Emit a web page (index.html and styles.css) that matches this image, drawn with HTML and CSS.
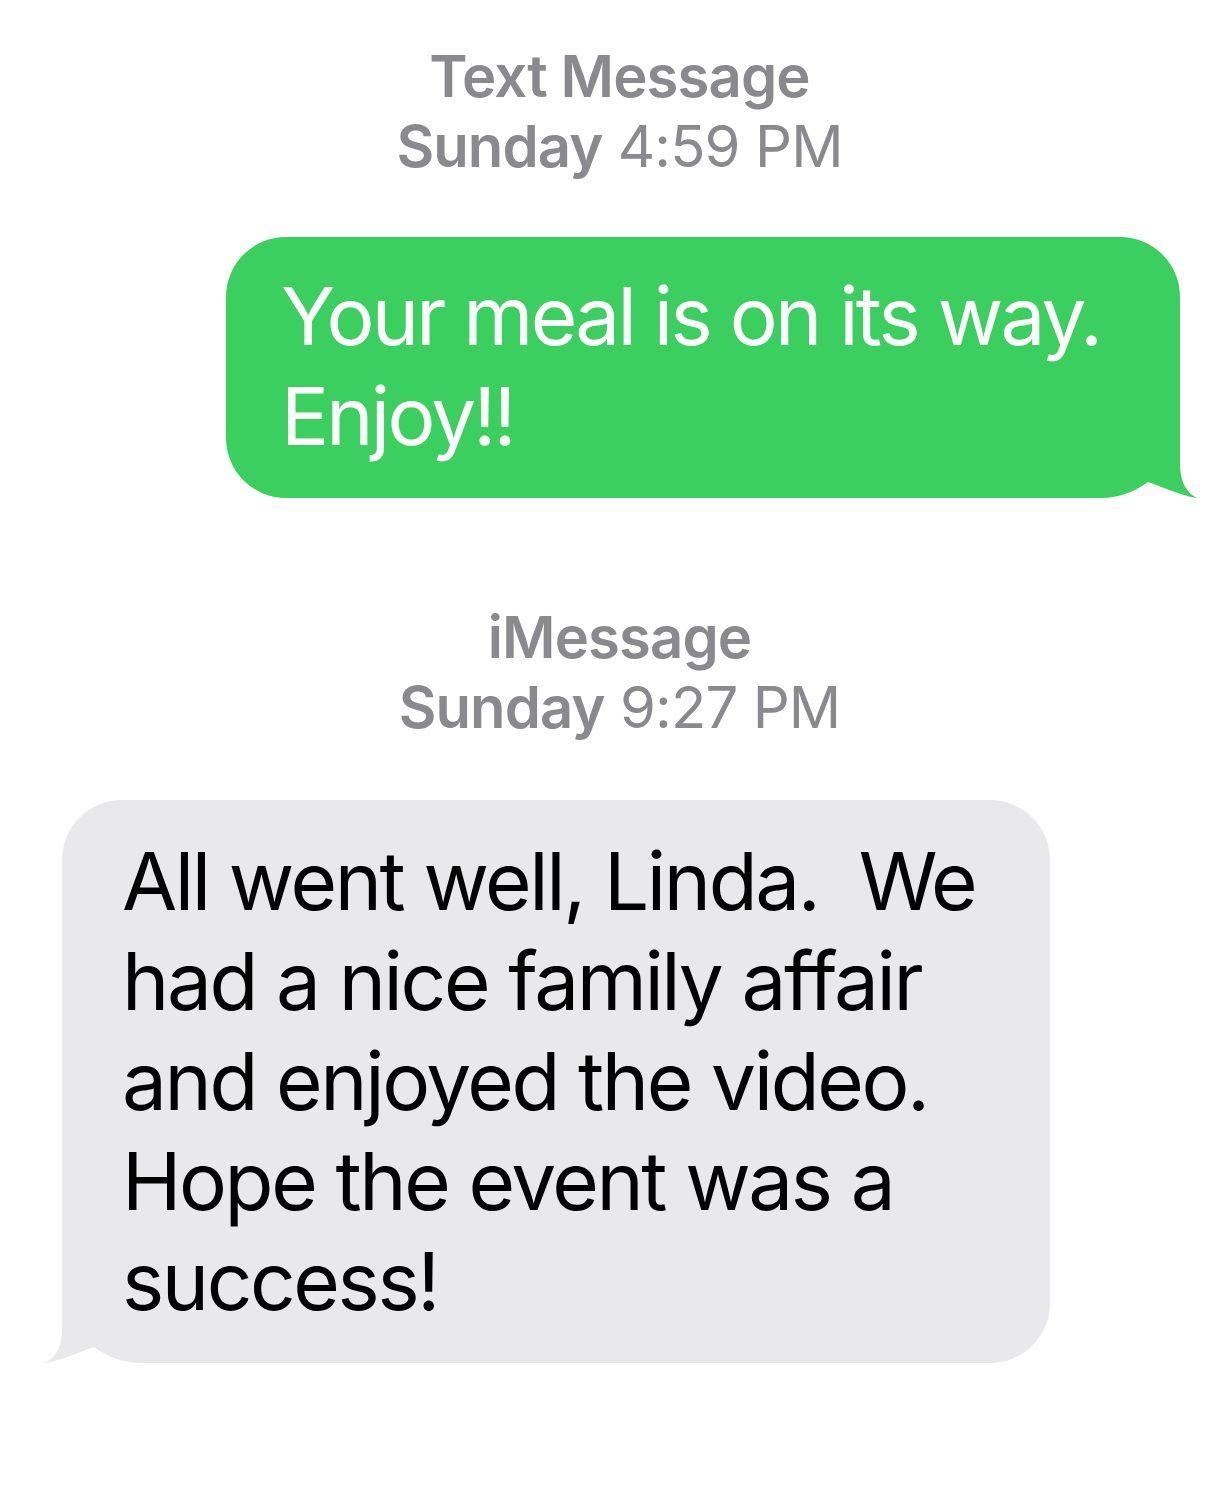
FILE: index.html
```html
<!DOCTYPE html>
<html lang="en">
<head>
<meta charset="utf-8">
<title>Messages</title>
<link rel="stylesheet" href="styles.css">
</head>
<body>
<main class="thread">
  <div class="stamp">
    <div class="stamp-kind">Text Message</div>
    <div class="stamp-time"><b>Sunday</b> 4:59 PM</div>
  </div>

  <div class="row row-out">
    <div class="bubble bubble-out">
      Your meal is on its way.<br>Enjoy!!
      <svg class="tail tail-out" viewBox="0 0 50 80" width="50" height="80" aria-hidden="true"><path d="M0 0 H33 V45 C33 62 38 74 50 80 C36 78 18 70 1 64 L0 64 Z"/></svg>
    </div>
  </div>

  <div class="stamp stamp-second">
    <div class="stamp-kind">iMessage</div>
    <div class="stamp-time"><b>Sunday</b> 9:27 PM</div>
  </div>

  <div class="row row-in">
    <div class="bubble bubble-in">
      All went well, Linda.&nbsp; We<br>had a nice family affair<br>and enjoyed the video.<br>Hope the event was a<br>success!
      <svg class="tail tail-in" viewBox="0 0 50 80" width="50" height="80" aria-hidden="true"><path d="M0 0 H33 V45 C33 62 38 74 50 80 C36 78 18 70 1 64 L0 64 Z"/></svg>
    </div>
  </div>
</main>
</body>
</html>
```

FILE: styles.css
```css
html, body {
  margin: 0;
  padding: 0;
  background: #ffffff;
}

body {
  font-family: Inter, "Noto Sans", "Liberation Sans", sans-serif;
  width: 1227px;
  min-height: 1493px;
}

.thread {
  display: flex;
  flex-direction: column;
  padding-top: 41px;
}

.stamp {
  text-align: center;
  color: #8a8a8e;
  font-size: 58px;
  line-height: 70px;
  letter-spacing: -0.9px;
  padding-left: 12px;
}

.stamp-kind {
  font-weight: 600;
}

.stamp-time b {
  font-weight: 600;
}

.stamp-second {
  margin-top: 104px;
}

.row {
  display: flex;
}

.row-out {
  justify-content: flex-end;
  padding-right: 47px;
  margin-top: 56px;
}

.row-in {
  justify-content: flex-start;
  padding-left: 62px;
  margin-top: 58px;
}

.bubble {
  position: relative;
  font-size: 80px;
  line-height: 100px;
  white-space: nowrap;
  box-sizing: border-box;
}

.bubble-out {
  width: 954px;
  background: #3acf5f;
  color: #ffffff;
  padding: 29px 20px 32px 55px;
  border-radius: 60px 60px 80px 60px;
  letter-spacing: -2.75px;
}

.bubble-in {
  width: 988px;
  background: #e9e9eb;
  color: #000000;
  padding: 31px 20px 32px 60px;
  border-radius: 60px 60px 60px 80px;
  letter-spacing: -2.4px;
}

.tail {
  position: absolute;
  bottom: 0;
  display: block;
}

.tail-out {
  right: -17px;
  fill: #3acf5f;
}

.tail-in {
  left: -17px;
  fill: #e9e9eb;
  transform: scaleX(-1);
}
```
